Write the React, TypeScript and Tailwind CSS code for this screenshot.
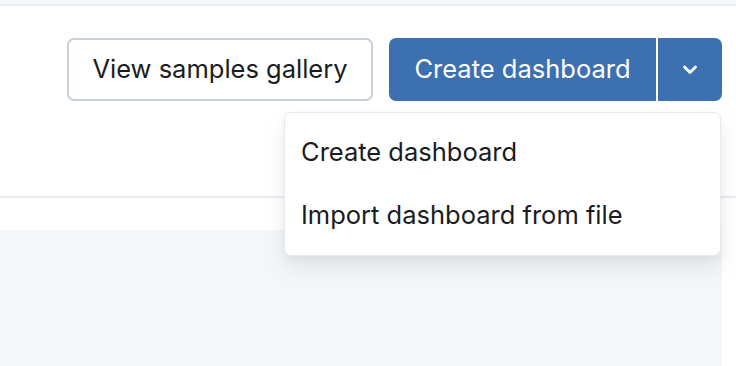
import React from "react";

export default function App() {
  return (
    <div
      className="relative w-[736px] h-[366px] overflow-hidden bg-white flex flex-col"
      style={{ fontFamily: "Inter, 'Noto Sans', sans-serif" }}
    >
      <div className="h-[6px] bg-[#f6f7f9] border-b-2 border-[#e9ecf0] shrink-0" />
      <div className="h-[192px] shrink-0 flex justify-end items-start pt-[32px] pr-[14px] gap-[16px] border-b-2 border-[#e9ecf0]">
        <button className="h-[63px] w-[306px] rounded-[7px] border-2 border-[#c6d0dc] bg-white text-[25.5px] text-[#1a1c21] flex items-center justify-center">
          View samples gallery
        </button>
        <div className="h-[63px] w-[333px] rounded-[7px] bg-[#3d70b0] flex items-stretch text-white">
          <div className="w-[267px] flex items-center justify-center text-[25.5px]">
            Create dashboard
          </div>
          <div className="w-[2px] bg-white" />
          <div className="flex-1 flex items-center justify-center">
            <svg width="16" height="11" viewBox="0 0 16 11" fill="none">
              <path d="M2.5 3 L8 8.5 L13.5 3" stroke="white" strokeWidth="2.8" strokeLinecap="round" strokeLinejoin="round" />
            </svg>
          </div>
        </div>
      </div>
      <div className="h-[32px] shrink-0 bg-white" />
      <div className="flex-1 w-[722px] bg-[#f5f6f8]" />

      <div className="absolute left-[284px] top-[112px] w-[437px] h-[144px] bg-white rounded-[7px] border border-[#e6e9ee] shadow-[0_12px_24px_rgba(0,0,0,0.08),0_4px_8px_rgba(0,0,0,0.04)] flex flex-col justify-center text-[25.5px] text-[#1a1c21]">
        <div className="h-[63px] flex items-center pl-[16px]">Create dashboard</div>
        <div className="h-[63px] flex items-center pl-[16px]">Import dashboard from file</div>
      </div>
    </div>
  );
}
